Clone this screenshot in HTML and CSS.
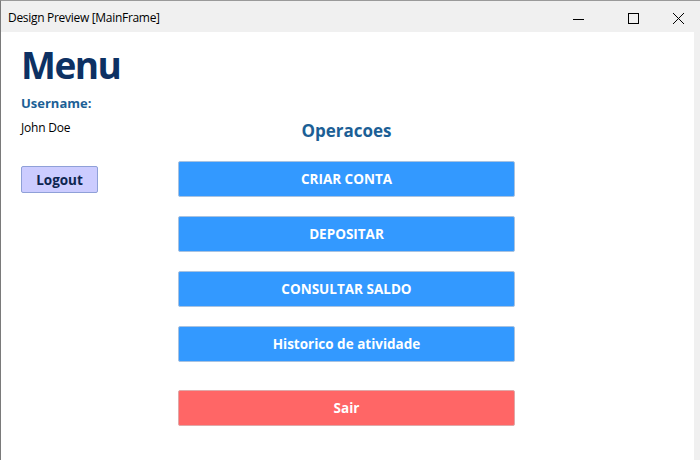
FILE: index.html
```html
<!DOCTYPE html>
<html>
<head>
<meta charset="utf-8">
<link rel="stylesheet" href="styles.css">
</head>
<body>
<div class="window">
  <div class="titlebar">
    <span class="title">Design Preview [MainFrame]</span>
    <div class="controls">
      <svg class="ctl ctl-min" width="45" height="30" viewBox="0 0 45 30"><line x1="17" y1="16.5" x2="28" y2="16.5" stroke="#000" stroke-width="1"/></svg>
      <svg class="ctl" width="45" height="30" viewBox="0 0 45 30"><rect x="17.5" y="10.5" width="10" height="10" fill="none" stroke="#000" stroke-width="1"/></svg>
      <svg class="ctl" width="44" height="30" viewBox="0 0 44 30"><path d="M17 10 L28 21 M28 10 L17 21" stroke="#000" stroke-width="1"/></svg>
    </div>
  </div>
  <div class="body">
    <div class="content">
      <div class="side">
        <h1 class="menu-title">Menu</h1>
        <div class="label">Username:</div>
        <div class="user">John Doe</div>
        <button class="logout">Logout</button>
      </div>
      <div class="ops">
        <h2 class="ops-title">Operacoes</h2>
        <button class="op">CRIAR CONTA</button>
        <button class="op">DEPOSITAR</button>
        <button class="op">CONSULTAR SALDO</button>
        <button class="op">Historico de atividade</button>
        <button class="op exit">Sair</button>
      </div>
    </div>
    <div class="rightstrip"></div>
  </div>
</div>
</body>
</html>
```
FILE: styles.css
```css
html, body {
  margin: 0;
  padding: 0;
  width: 700px;
  height: 460px;
  overflow: hidden;
  background: #f0f0f0;
}
.window {
  width: 700px;
  height: 460px;
  box-sizing: border-box;
  border-top: 1px solid #9a9a9a;
  border-left: 1px solid #7a7a7a;
  background: #f0f0f0;
  display: flex;
  flex-direction: column;
  font-family: "Open Sans", "DejaVu Sans", sans-serif;
}
.titlebar {
  height: 31px;
  display: flex;
  align-items: center;
  justify-content: space-between;
  flex-shrink: 0;
}
.title {
  font-size: 12px;
  color: #000;
  padding-left: 7px;
  padding-top: 2px;
  letter-spacing: -0.3px;
}
.controls {
  display: flex;
  margin-top: 2px;
}
.ctl { display: block; }
.ctl-min { margin-right: 10px; }
.body {
  flex: 1;
  display: flex;
}
.content {
  flex: 1;
  background: #fff;
  display: flex;
  padding-left: 20px;
}
.rightstrip {
  width: 6px;
  background: #f0f0f0;
}
.side {
  width: 157px;
  display: flex;
  flex-direction: column;
  align-items: flex-start;
}
.menu-title {
  margin: 9px 0 0 0;
  font-size: 37px;
  line-height: 48px;
  font-weight: 700;
  color: #0d3163;
  letter-spacing: -1.5px;
}
.label {
  margin-top: 5px;
  font-size: 13px;
  line-height: 18px;
  font-weight: 700;
  color: #1c5f96;
}
.user {
  margin-top: 8px;
  font-size: 12px;
  line-height: 16px;
  color: #000;
  letter-spacing: -0.2px;
}
.logout {
  margin-top: 30px;
  width: 77px;
  height: 27px;
  box-sizing: border-box;
  background: #ccccff;
  border: 1px solid #8fa0d8;
  border-radius: 2px;
  font-family: inherit;
  font-size: 13.5px;
  font-weight: 700;
  color: #0d2550;
  padding: 0;
}
.ops {
  width: 337px;
  display: flex;
  flex-direction: column;
  gap: 19px;
  padding-top: 88px;
}
.ops-title {
  margin: 0;
  text-align: center;
  font-size: 17px;
  line-height: 22px;
  font-weight: 700;
  color: #1c5f96;
}
.op {
  height: 36px;
  box-sizing: border-box;
  background: #3399ff;
  border: 1px solid #a8c2e0;
  border-radius: 2px;
  color: #fff;
  font-family: inherit;
  font-size: 13.5px;
  font-weight: 700;
  padding: 0;
}
.exit {
  background: #ff6666;
  border-color: #e0a8a8;
  margin-top: 9px;
}
```
